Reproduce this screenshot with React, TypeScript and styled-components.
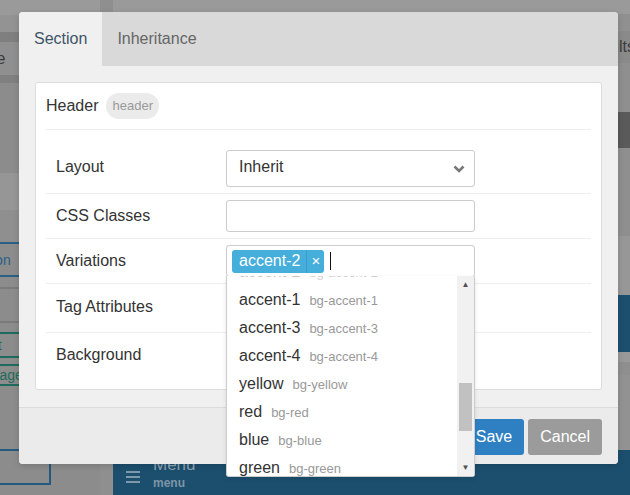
import styled, { createGlobalStyle } from 'styled-components';

const GlobalStyle = createGlobalStyle`
  body {
    margin: 0;
    font-family: 'Liberation Sans', Arial, sans-serif;
  }
`;

const Page = styled.div`
  position: relative;
  width: 630px;
  height: 495px;
  overflow: hidden;
  display: flex;
  background: #8f8f8f;
`;

/* ---------- dimmed page behind the modal ---------- */

const Sidebar = styled.div`
  width: 100px;
  margin-right: 13px;
  display: flex;
  flex-direction: column;
  background: #8c8c8c;
`;

const Strip = styled.div<{ $h: number; $bg: string }>`
  height: ${({ $h }) => $h}px;
  flex-shrink: 0;
  background: ${({ $bg }) => $bg};
  display: flex;
  align-items: center;
  overflow: hidden;
  font-size: 16px;
  color: #3a3a3a;
  white-space: nowrap;
`;

const Clipped = styled.span<{ $shift: number }>`
  margin-left: ${({ $shift }) => $shift}px;
`;

const OutlineBtn = styled.div<{ $h: number; $color: string; $mt: number }>`
  height: ${({ $h }) => $h - 4}px;
  margin-top: ${({ $mt }) => $mt}px;
  width: 49px;
  flex-shrink: 0;
  border: 2px solid ${({ $color }) => $color};
  border-left: 0;
  display: flex;
  align-items: center;
  overflow: hidden;
  white-space: nowrap;
  font-size: 14px;
  color: ${({ $color }) => $color};
`;

const Main = styled.div`
  flex: 1;
  display: flex;
  flex-direction: column;
`;

const RightText = styled.span`
  margin-left: auto;
  margin-right: -5px;
  color: #3c3c3c;
`;

const MenuBar = styled.div`
  flex: 1;
  background: #1c4f6e;
  display: flex;
  align-items: flex-start;
  gap: 13px;
  padding: 20px 0 0 13px;
`;

const Burger = styled.div`
  width: 14px;
  padding-top: 1px;
  display: flex;
  flex-direction: column;
  gap: 3px;
  span {
    height: 2px;
    background: #7f98aa;
  }
`;

const MenuText = styled.div`
  display: flex;
  flex-direction: column;
  margin-top: -15px;
  color: #8ea3b3;
  font-size: 17px;
  line-height: 20px;
  small {
    margin-top: 1px;
    font-size: 12px;
    font-weight: bold;
    line-height: 15px;
    color: #7d95a6;
  }
`;

/* ---------- modal ---------- */

const Modal = styled.div`
  position: absolute;
  left: 19px;
  top: 12px;
  width: 599px;
  height: 452px;
  display: flex;
  flex-direction: column;
  border-radius: 4px;
  background: #f0f0f0;
  box-shadow: 0 2px 6px rgba(0, 0, 0, 0.15);
`;

const Tabs = styled.div`
  display: flex;
  height: 54px;
  background: #d9d9d9;
  border-radius: 4px 4px 0 0;
`;

const Tab = styled.div<{ $active?: boolean }>`
  padding: 0 15px;
  line-height: 54px;
  font-size: 16px;
  color: ${({ $active }) => ($active ? '#3d5566' : '#666')};
  background: ${({ $active }) => ($active ? '#f0f0f0' : 'transparent')};
  border-radius: ${({ $active }) => ($active ? '4px 0 0 0' : '0')};
`;

const Body = styled.div`
  padding: 16px 16px 17px;
  background: #f0f0f0;
`;

const Card = styled.div`
  height: 308px;
  box-sizing: border-box;
  background: #fff;
  border: 1px solid #ddd;
  border-radius: 3px;
  padding: 10px 10px 0;
`;

const CardHeader = styled.div`
  display: flex;
  align-items: center;
  gap: 8px;
  padding-bottom: 10px;
  border-bottom: 1px solid #eee;
  font-size: 16px;
  color: #333;
`;

const Badge = styled.span`
  height: 26px;
  line-height: 26px;
  padding: 0 6px;
  border-radius: 13px;
  background: #ebebeb;
  color: #999;
  font-size: 13px;
`;

const Form = styled.div`
  margin-top: 14px;
`;

const Row = styled.div<{ $last?: boolean }>`
  display: flex;
  align-items: center;
  padding: 6px 0;
  border-bottom: ${({ $last }) => ($last ? '0' : '1px solid #eee')};
`;

const Label = styled.div<{ $lift?: number }>`
  width: 170px;
  padding-left: 10px;
  margin-top: ${({ $lift }) => -($lift ?? 0)}px;
  font-size: 16px;
  color: #333;
`;

const Field = styled.div<{ $h: number }>`
  position: relative;
  width: 249px;
  height: ${({ $h }) => $h}px;
  box-sizing: border-box;
  border: 1px solid #ccc;
  border-radius: 3px;
  background: #fff;
  display: flex;
  align-items: center;
  font-size: 16px;
  color: #333;
`;

const Bare = styled.div<{ $h: number }>`
  height: ${({ $h }) => $h}px;
`;

const SelectValue = styled.span`
  flex: 1;
  padding-left: 12px;
  margin-top: -4px;
`;

const Chevron = styled.svg`
  margin-right: 9px;
`;

const Chip = styled.span`
  display: flex;
  align-items: center;
  height: 23px;
  margin-left: 5px;
  border-radius: 3px;
  background: #45aedb;
  color: #fff;
  font-size: 16px;
`;

const ChipText = styled.span`
  padding: 0 6px 0 7px;
`;

const ChipClose = styled.span`
  height: 23px;
  line-height: 22px;
  padding: 0 4px 0 4px;
  border-left: 1px solid #3d9cc6;
  font-size: 15px;
`;

const Caret = styled.span`
  width: 1px;
  height: 18px;
  margin-left: 6px;
  background: #111;
`;

const Dropdown = styled.div`
  position: absolute;
  top: 100%;
  left: -1px;
  width: 249px;
  height: 201px;
  box-sizing: border-box;
  z-index: 5;
  display: flex;
  background: #fff;
  border: 1px solid #ccc;
  border-top: 0;
  border-radius: 0 0 3px 3px;
  box-shadow: 0 2px 4px rgba(0, 0, 0, 0.1);
`;

const List = styled.div`
  flex: 1;
  overflow: hidden;
`;

const ListInner = styled.div`
  margin-top: -18px;
`;

const Option = styled.div<{ $muted?: boolean }>`
  height: 28px;
  display: flex;
  align-items: center;
  padding-left: 12px;
  font-size: 16px;
  color: ${({ $muted }) => ($muted ? '#c4c4c4' : '#333')};
  white-space: nowrap;
  small {
    margin-left: 9px;
    font-size: 13px;
    color: ${({ $muted }) => ($muted ? '#d0d0d0' : '#999')};
  }
`;

const Scrollbar = styled.div`
  width: 17px;
  display: flex;
  flex-direction: column;
  background: #f1f1f1;
`;

const Arrow = styled.div`
  height: 17px;
  display: flex;
  align-items: center;
  justify-content: center;
  font-size: 8px;
  color: #505050;
`;

const Track = styled.div`
  flex: 1;
`;

const Thumb = styled.div`
  margin: 90px 2px 0;
  height: 48px;
  background: #c1c1c1;
`;

const Footer = styled.div`
  flex: 1;
  display: flex;
  justify-content: flex-end;
  align-items: flex-start;
  gap: 4px;
  padding: 11px 16px 0;
  border-top: 1px solid #dcdcdc;
  background: #ebebeb;
  border-radius: 0 0 4px 4px;
`;

const Button = styled.button<{ $primary?: boolean }>`
  height: 36px;
  padding: 0 12px;
  border: 0;
  border-radius: 3px;
  font-family: inherit;
  font-size: 16px;
  color: #fff;
  background: ${({ $primary }) => ($primary ? '#2f80c2' : '#9b9b9b')};
`;

const options = [
  ['accent-1', 'bg-accent-1'],
  ['accent-3', 'bg-accent-3'],
  ['accent-4', 'bg-accent-4'],
  ['yellow', 'bg-yellow'],
  ['red', 'bg-red'],
  ['blue', 'bg-blue'],
  ['green', 'bg-green'],
  ['grey', 'bg-grey'],
];

const App = () => (
  <>
    <GlobalStyle />
    <Page>
      <Sidebar>
        <Strip $h={15} $bg="#9a9a9a" />
        <Strip $h={17} $bg="#939393" />
        <Strip $h={10} $bg="#7f7f7f" />
        <Strip $h={33} $bg="#8f8f8f">
          <Clipped $shift={-32}>Page</Clipped>
        </Strip>
        <Strip $h={8} $bg="#808080" />
        <Strip $h={90} $bg="#8c8c8c" />
        <Strip $h={37} $bg="#969696" />
        <Strip $h={32} $bg="#8f8f8f" />
        <OutlineBtn $h={35} $mt={0} $color="#2b5f86">
          <Clipped $shift={-36}>Section</Clipped>
        </OutlineBtn>
        <OutlineBtn $h={36} $mt={10} $color="#7a7a7a" />
        <OutlineBtn $h={26} $mt={9} $color="#1f6b5b">
          <Clipped $shift={-24}>Text</Clipped>
        </OutlineBtn>
        <OutlineBtn $h={22} $mt={6} $color="#1f6b5b">
          <Clipped $shift={-16}>Image</Clipped>
        </OutlineBtn>
        <OutlineBtn $h={36} $mt={63} $color="#245a7f" />
      </Sidebar>

      <Main>
        <Strip $h={14} $bg="#9a9a9a" />
        <Strip $h={17} $bg="#909090" />
        <Strip $h={32} $bg="#8a8a8a">
          <RightText>Results</RightText>
        </Strip>
        <Strip $h={49} $bg="#8f8f8f" />
        <Strip $h={36} $bg="#5a5a5a" />
        <Strip $h={88} $bg="#8f8f8f" />
        <Strip $h={59} $bg="#979797" />
        <Strip $h={57} $bg="#1c4f6e" />
        <Strip $h={10} $bg="#999" />
        <Strip $h={13} $bg="#8f8f8f" />
        <Strip $h={75} $bg="#929292" />
        <MenuBar>
          <Burger>
            <span />
            <span />
            <span />
          </Burger>
          <MenuText>
            Menu
            <small>menu</small>
          </MenuText>
        </MenuBar>
      </Main>

      <Modal>
        <Tabs>
          <Tab $active>Section</Tab>
          <Tab>Inheritance</Tab>
        </Tabs>
        <Body>
          <Card>
            <CardHeader>
              Header
              <Badge>header</Badge>
            </CardHeader>
            <Form>
              <Row>
                <Label $lift={3}>Layout</Label>
                <Field $h={37}>
                  <SelectValue>Inherit</SelectValue>
                  <Chevron width="12" height="8" viewBox="0 0 12 8">
                    <polyline points="1.5,1.5 6,6 10.5,1.5" fill="none" stroke="#777" strokeWidth="2.6" />
                  </Chevron>
                </Field>
              </Row>
              <Row>
                <Label>CSS Classes</Label>
                <Field $h={32} />
              </Row>
              <Row>
                <Label>Variations</Label>
                <Field $h={32}>
                  <Chip>
                    <ChipText>accent-2</ChipText>
                    <ChipClose>×</ChipClose>
                  </Chip>
                  <Caret />
                  <Dropdown>
                    <List>
                      <ListInner>
                        <Option $muted>
                          accent-2<small>bg-accent-2</small>
                        </Option>
                        {options.map(([name, cls]) => (
                          <Option key={name}>
                            {name}
                            <small>{cls}</small>
                          </Option>
                        ))}
                      </ListInner>
                    </List>
                    <Scrollbar>
                      <Arrow>▲</Arrow>
                      <Track>
                        <Thumb />
                      </Track>
                      <Arrow>▼</Arrow>
                    </Scrollbar>
                  </Dropdown>
                </Field>
              </Row>
              <Row>
                <Label $lift={3}>Tag Attributes</Label>
                <Bare $h={36} />
              </Row>
              <Row $last>
                <Label $lift={1}>Background</Label>
                <Bare $h={32} />
              </Row>
            </Form>
          </Card>
        </Body>
        <Footer>
          <Button $primary>Save</Button>
          <Button>Cancel</Button>
        </Footer>
      </Modal>
    </Page>
  </>
);

export default App;
